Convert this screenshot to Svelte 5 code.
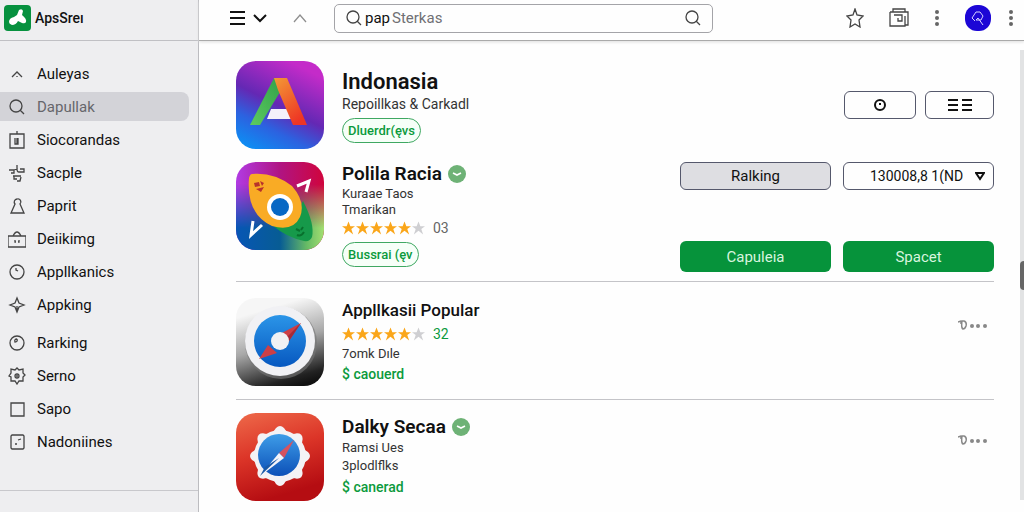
<script>
    let selected = $state("Dapullak");
    let query = $state("");
    let price = $state("130008,8 1(ND");

    const groups = [
        [
            { name: "Auleyas", d: "M4 12l5-5 5 5M9 11v1" },
            { name: "Dapullak", d: "M14 8a6 6 0 1 1-12 0a6 6 0 0 1 12 0M12 12l4 4" },
            { name: "Siocorandas", d: "M2 3h14v14H2zM9 0v3M7 7v6h3V7M9 7v6" },
            { name: "Sacple", d: "M9 1v4M1 6h5v3H3M6 6l3-1q0 3 2 3h5V5h-4M5 12h8M6 12v3h3M9 17h3l1-4" },
            { name: "Paprit", d: "M9 2a3 3 0 0 0-2 5l-4 9h13l-4-9a3 3 0 0 0-3-5z" },
            { name: "Deiikimg", d: "M0 6h18v11H0zM5 6q4-8 8 0M7 10v2h1M11 10v2h-1" },
            { name: "Appllkanics", d: "M16 9a7 7 0 1 1-14 0a7 7 0 0 1 14 0M8 5v2l2 1" },
            { name: "Appking", d: "M9 2l2 5 5 2-5 2-2 5-2-5-5-2 5-2zM9 10v6" },
        ],
        [
            { name: "Rarking", d: "M16 9a7 7 0 1 1-14 0a7 7 0 0 1 14 0M9 5q-3 0-2 3q3 0 2-3" },
            {
                name: "Serno",
                d: "M7 3l2-2 2 2 4-1v4l2 2-2 2v4l-4 0-2 3-2-3-4 0v-4L1 9l2-3V2zM11 9a2 2 0 1 1-4 0a2 2 0 0 1 4 0M8 9h2",
            },
            { name: "Sapo", d: "M3 3h13v13H3z" },
            { name: "Nadoniines", d: "M4 2h11l1 1v12l-1 1H4l-1-1V3zM7 11h2M10 7l3-1" },
        ],
    ];

    const apps = [
        {
            name: "Indonasia",
            art: "letter",
            size: "large",
            subs: ["Repoillkas & Carkadl"],
            pill: "Dluerdr(ęvs",
        },
        {
            name: "Polila Racia",
            art: "rocket",
            size: "medium",
            verified: true,
            subs: ["Kuraae Taos", "Tmarikan"],
            votes: "03",
            pill: "Bussrai (ęv",
        },
        {
            name: "Appllkasii Popular",
            art: "dial",
            size: "small",
            subs: ["7omk Dıle"],
            votes: "32",
            offer: "$ caouerd",
        },
        {
            name: "Dalky Secaa",
            art: "gear",
            size: "medium",
            verified: true,
            subs: ["Ramsi Ues", "3plodlflks"],
            offer: "$ canerad",
        },
    ];
</script>

{#snippet lens()}
    <svg class="icon" width="18" height="18" viewBox="0 0 18 18">
        <circle cx="8" cy="8" r="6" />
        <path d="M12 12l4 4" />
    </svg>
{/snippet}

{#snippet dots()}
    <svg width="6" height="18" viewBox="0 0 6 18" fill="#666">
        <circle cx="3" cy="3" r="2" />
        <circle cx="3" cy="9" r="2" />
        <circle cx="3" cy="15" r="2" />
    </svg>
{/snippet}

{#snippet stars(votes, green)}
    <div class="stars">
        {#each [1, 2, 3, 4, 5, 6] as n}
            <svg width="13" height="14" viewBox="0 0 14 14">
                <path
                    fill={n < 6 ? "#faa61a" : "#cfcfd2"}
                    d="M7 0l2 5h5l-4 3 2 6-5-4-5 4 2-6-4-3h5z"
                />
            </svg>
        {/each}
        <span class:green>{votes}</span>
    </div>
{/snippet}

{#snippet art(kind)}
    <svg class="art" width="88" height="88" viewBox="0 0 88 88">
        {#if kind === "letter"}
            <defs>
                <linearGradient id="night" x1="0.1" y1="1" x2="0.6" y2="0">
                    <stop offset="0" stop-color="#0a92f5" />
                    <stop offset="0.3" stop-color="#2c62e0" />
                    <stop offset="0.55" stop-color="#6428b4" />
                    <stop offset="1" stop-color="#c42bc9" />
                </linearGradient>
                <linearGradient id="leg" x1="0" y1="0" x2="0.6" y2="1">
                    <stop offset="0" stop-color="#f39a35" />
                    <stop offset="1" stop-color="#ee3524" />
                </linearGradient>
                <linearGradient id="leaf" x1="1" y1="0" x2="0" y2="1">
                    <stop offset="0" stop-color="#2f9e48" />
                    <stop offset="1" stop-color="#5ccb60" />
                </linearGradient>
            </defs>
            <rect width="88" height="88" fill="url(#night)" />
            <path d="M35 48h20v10H31z" fill="#f4f0fa" />
            <path d="M38 17h11l-5 14-20 33H14z" fill="url(#leaf)" />
            <path d="M38 17h13l20 47H57L42 29z" fill="url(#leg)" />
        {:else if kind === "rocket"}
            <defs>
                <linearGradient id="sky" x1="0" y1="0" x2="1" y2="0">
                    <stop offset="0" stop-color="#b13be4" />
                    <stop offset="0.5" stop-color="#b01482" />
                    <stop offset="1" stop-color="#d0043c" />
                </linearGradient>
                <linearGradient id="sea" x1="0" y1="0" x2="1" y2="0">
                    <stop offset="0" stop-color="#0756b5" />
                    <stop offset="0.5" stop-color="#075c94" />
                    <stop offset="0.8" stop-color="#66ba65" />
                    <stop offset="1" stop-color="#a3df71" />
                </linearGradient>
                <linearGradient id="fade" x1="0" y1="0" x2="0" y2="1">
                    <stop offset="0.25" stop-color="#000" />
                    <stop offset="0.75" stop-color="#fff" />
                </linearGradient>
                <mask id="low"><rect width="88" height="88" fill="url(#fade)" /></mask>
            </defs>
            <rect width="88" height="88" fill="url(#sky)" />
            <rect width="88" height="88" fill="url(#sea)" mask="url(#low)" />
            <path d="M36 63q20-2 31-24 12 23 9 36-2 5-8 4-18-4-32-16z" fill="#16994a" />
            <path
                d="M16 12q22-2 40 12 14 16 8 31-7 15-28 9Q10 52 13 16q1-4 3-4z"
                fill="#f9ab25"
            />
            <circle cx="44" cy="45" r="13" fill="#fff" />
            <circle cx="44" cy="45" r="9" fill="#0868c4" />
            <path
                d="M18 21l5-1 1 4-5 1zM24 19l4 2-2 3zM20 27l8-2-3 5z"
                fill="#b8322c"
            />
            <path d="M60 67l4 2M67 65l-2 3M61 73q4 2 7-3" stroke="#08702d" stroke-width="2" fill="none" />
            <path
                d="M61 24l12-5-3 11M17 59l-2 14 11-10"
                stroke="#fff"
                stroke-width="3"
                fill="none"
            />
        {:else if kind === "dial"}
            <defs>
                <linearGradient id="steel" x1="0.4" y1="0" x2="0.7" y2="1">
                    <stop offset="0.1" stop-color="#f6f6f6" />
                    <stop offset="0.5" stop-color="#a8a8a8" />
                    <stop offset="0.9" stop-color="#222" />
                    <stop offset="1" stop-color="#111" />
                </linearGradient>
                <linearGradient id="face" x1="0" y1="0" x2="0" y2="1">
                    <stop offset="0" stop-color="#2b95e8" />
                    <stop offset="1" stop-color="#0758c0" />
                </linearGradient>
            </defs>
            <rect width="88" height="88" fill="url(#steel)" />
            <circle cx="45" cy="45" r="36" fill="#777" opacity="0.6" />
            <circle cx="44" cy="43" r="35" fill="#f1f1f4" />
            <circle cx="44" cy="43" r="26" fill="url(#face)" />
            <path d="M65 25L49 49l-9-11zM23 61l9-14 9 8z" fill="#cd3f46" />
            <path d="M65 25L49 49l-3-5z" fill="#a52b38" />
            <circle cx="44" cy="43" r="9" fill="#f1f1f4" />
        {:else}
            <defs>
                <linearGradient id="brick" x1="0" y1="0" x2="0.3" y2="1">
                    <stop offset="0" stop-color="#ee6a4a" />
                    <stop offset="0.5" stop-color="#dc3528" />
                    <stop offset="1" stop-color="#b50d12" />
                </linearGradient>
                <linearGradient id="glass" x1="0" y1="0" x2="0" y2="1">
                    <stop offset="0" stop-color="#3e9de8" />
                    <stop offset="1" stop-color="#0c50b8" />
                </linearGradient>
            </defs>
            <rect width="88" height="88" fill="url(#brick)" />
            <g fill="#f4f2f5">
                <circle cx="44" cy="43" r="26" />
                {#each [0, 45, 90, 135, 180, 225, 270, 315] as angle}
                    <path
                        d="M34 21q4-2 6-6 4-4 8 0 2 4 6 6z"
                        transform="rotate({angle} 44 43)"
                    />
                {/each}
            </g>
            <circle cx="43" cy="42" r="21" fill="url(#glass)" />
            <path d="M58 27L43 40l5 5z" fill="#d45360" />
            <path d="M43 40l5 5-25 19z" fill="#f4f4fa" />
            <path d="M43 45L24 63l5-9z" fill="#1959a8" />
        {/if}
    </svg>
{/snippet}

<div class="shell">
    <aside>
        <a class="brand" href="#home">
            <svg width="27" height="26" viewBox="0 0 27 26">
                <rect width="27" height="26" rx="4" fill="#07913f" />
                <path
                    d="M15 5q3-2 4 1l-1 4q5 4 4 7-1 2-4 1l-4-2q-2 4-6 4-3-1-3-3 0-4 5-5l3-2z"
                    fill="#fff"
                />
            </svg>
            <span>ApsSreı</span>
        </a>
        <nav>
            {#each groups as group}
                <ul>
                    {#each group as item}
                        <li>
                            <a
                                href="#{item.name}"
                                class:selected={item.name === selected}
                                onclick={() => (selected = item.name)}
                            >
                                <svg class="icon" width="18" height="18" viewBox="0 0 18 18">
                                    <path d={item.d} />
                                </svg>
                                <span>{item.name}</span>
                            </a>
                        </li>
                    {/each}
                </ul>
            {/each}
        </nav>
        <div class="foot"></div>
    </aside>

    <div class="page">
        <header>
            <button type="button" class="plain" aria-label="Menu">
                <svg class="icon bold" width="38" height="18" viewBox="0 0 38 18">
                    <path d="M1 3h15M1 9h15M1 15h15M25 6l6 6 6-6" />
                </svg>
            </button>
            <button type="button" class="plain up" aria-label="Up">
                <svg class="icon" width="14" height="18" viewBox="0 0 14 18">
                    <path d="M1 13l6-7 6 7" />
                </svg>
            </button>
            <form class="search" role="search">
                <label for="query">{@render lens()}<span>pap</span></label>
                <input id="query" type="text" placeholder="Sterkas" bind:value={query} />
                <button type="submit" class="plain" aria-label="Search">
                    {@render lens()}
                </button>
            </form>
            <div class="tools">
                <button type="button" class="plain" aria-label="Favourite">
                    <svg class="icon" width="18" height="20" viewBox="0 0 18 20">
                        <path d="M9 1l2 6 6 1-4 4 1 7-5-3-5 3 1-7-4-4 6-1z" />
                    </svg>
                </button>
                <button type="button" class="plain" aria-label="Windows">
                    <svg class="icon" width="20" height="20" viewBox="0 0 20 20">
                        <path d="M4 4V1h12v3M1 4h18v13h-3M16 8v10H1V4M5 7h8v6H9v-3" />
                    </svg>
                </button>
                <button type="button" class="plain" aria-label="More">
                    {@render dots()}
                </button>
                <button type="button" class="plain avatar" aria-label="Account">
                    <svg width="26" height="26" viewBox="0 0 26 26">
                        <rect width="26" height="26" rx="12" fill="#1c06d6" />
                        <path
                            d="M10 16l-3-3 4-6h4l3 4-2 4h-5l2-2 5 7"
                            fill="none"
                            stroke="#d5d0ff"
                        />
                    </svg>
                </button>
                <button type="button" class="plain" aria-label="Options">
                    {@render dots()}
                </button>
            </div>
        </header>

        <div class="body">
            <main>
                {#each apps as app, i}
                    <article class={app.art}>
                        {@render art(app.art)}
                        <div class="info">
                            <h2 class={app.size}>
                                {app.name}
                                {#if app.verified}
                                    <svg width="18" height="18" viewBox="0 0 18 18">
                                        <circle cx="9" cy="9" r="9" fill="#6eb276" />
                                        <path
                                            d="M5 8l4 2 4-2"
                                            fill="none"
                                            stroke="#fff"
                                            stroke-width="1.6"
                                        />
                                    </svg>
                                {/if}
                            </h2>
                            {#if app.votes && app.offer}
                                {@render stars(app.votes, true)}
                            {/if}
                            {#each app.subs as sub}
                                <p>{sub}</p>
                            {/each}
                            {#if app.votes && app.pill}
                                {@render stars(app.votes, false)}
                            {/if}
                            {#if app.pill}
                                <button type="button" class="pill">{app.pill}</button>
                            {:else}
                                <a class="offer" href="#offer">{app.offer}</a>
                            {/if}
                        </div>
                        {#if i === 0}
                            <div class="views">
                                <button type="button" class="box" aria-label="Recent">
                                    <svg class="icon bold" width="14" height="14" viewBox="0 0 14 14">
                                        <circle cx="7" cy="7" r="5" />
                                        <path d="M6 6h2" />
                                    </svg>
                                </button>
                                <button type="button" class="box" aria-label="List">
                                    <svg class="icon bold" width="26" height="14" viewBox="0 0 26 14">
                                        <path d="M1 2h10M1 7h10M1 12h10M15 2h10M15 7h10M15 12h10" />
                                    </svg>
                                </button>
                            </div>
                        {:else if i === 1}
                            <div class="actions">
                                <button type="button" class="box shaded">Ralking</button>
                                <div class="select">
                                    <select class="box" aria-label="Price" bind:value={price}>
                                        <option>130008,8 1(ND</option>
                                    </select>
                                    <svg class="icon bold" width="10" height="10" viewBox="0 0 10 10">
                                        <path d="M1 2h8L5 8z" />
                                    </svg>
                                </div>
                                <button type="button" class="solid">Capuleia</button>
                                <button type="button" class="solid">Spacet</button>
                            </div>
                        {:else}
                            <button type="button" class="plain more" aria-label="More">
                                <svg width="30" height="10" viewBox="0 0 30 10" fill="#888">
                                    <path
                                        d="M0 2l3-1v3M4 1h2q3 1 2 5-1 3-3 3-2-1-1-8"
                                        fill="none"
                                        stroke="#888"
                                        stroke-width="1.5"
                                    />
                                    <circle cx="14" cy="6" r="2" />
                                    <circle cx="20" cy="6" r="2" />
                                    <circle cx="27" cy="6" r="2" />
                                </svg>
                            </button>
                        {/if}
                    </article>
                {/each}
            </main>
            <div class="scroll"><div class="thumb"></div></div>
        </div>
    </div>
</div>

<style>
    :global(body) {
        background: #fefefe;
        color: #111;
        font-family: Roboto, "Liberation Sans", sans-serif;
    }

    * {
        box-sizing: border-box;
    }

    button,
    input,
    select {
        font: inherit;
        color: inherit;
    }

    a {
        color: inherit;
        text-decoration: none;
    }

    svg {
        display: block;
        flex: none;
    }

    .icon {
        fill: none;
        stroke: #444;
        stroke-width: 1.3;
    }

    .icon.bold {
        stroke: #111;
        stroke-width: 2;
    }

    .plain {
        padding: 0;
        border: 0;
        background: none;
    }

    .shell {
        display: flex;
        min-height: 100vh;
    }

    aside {
        display: flex;
        flex-direction: column;
        flex: none;
        width: 199px;
        background: #eeeef0;
        border-right: 1px solid #bcbcc0;
    }

    .brand {
        display: flex;
        align-items: center;
        gap: 4px;
        height: 41px;
        padding: 0 4px 4px;
        border-bottom: 1px solid #c0c0c4;
        font-size: 14px;
        font-weight: 500;
    }

    nav {
        display: flex;
        flex-direction: column;
        flex: 1;
        gap: 9px;
        padding: 18px 9px 0 0;
    }

    ul {
        display: grid;
        gap: 4px;
        margin: 0;
        padding: 0;
        list-style: none;
    }

    li a {
        display: flex;
        align-items: center;
        gap: 11px;
        height: 29px;
        padding-left: 8px;
        border-radius: 0 8px 8px 0;
        font-size: 15px;
    }

    li a.selected {
        background: #d3d3d8;
        color: #66666b;
    }

    .foot {
        height: 22px;
        border-top: 1px solid #c8c8cc;
    }

    .page {
        display: flex;
        flex-direction: column;
        flex: 1;
        min-width: 0;
    }

    header {
        display: flex;
        align-items: center;
        height: 41px;
        padding: 0 10px 4px 30px;
        border-bottom: 1px solid #aaa;
        box-shadow: 0 1px 3px #ddd;
    }

    .up {
        margin: 0 27px 0 26px;
        opacity: 0.6;
    }

    .search {
        display: flex;
        align-items: center;
        flex: 0 1 379px;
        height: 29px;
        padding: 0 10px;
        border: 1px solid #a4a4a8;
        border-radius: 5px;
        font-size: 15px;
    }

    .search label {
        display: flex;
        align-items: center;
        gap: 2px;
    }

    .search input {
        flex: 1;
        min-width: 0;
        padding: 0 2px;
        border: 0;
        outline: 0;
        background: none;
    }

    .search input::placeholder {
        color: #707074;
    }

    .tools {
        display: flex;
        align-items: center;
        gap: 25px;
        margin-left: auto;
    }

    .tools .avatar {
        margin-right: -8px;
    }

    .body {
        display: flex;
        flex: 1;
    }

    main {
        flex: 1;
        padding: 20px 26px 0 37px;
    }

    article {
        display: flex;
        gap: 18px;
        padding-bottom: 13px;
    }

    article.rocket {
        padding-bottom: 9px;
        border-bottom: 1px solid #c4c4c8;
    }

    article.dial {
        padding-top: 16px;
        border-bottom: 1px solid #c4c4c8;
    }

    article.gear {
        padding: 13px 0 0;
    }

    .art {
        border-radius: 20px;
    }

    .info {
        display: flex;
        flex-direction: column;
        align-items: flex-start;
        flex: 1;
    }

    .letter .info {
        padding-top: 9px;
    }

    .gear .info {
        padding-top: 2px;
    }

    h2 {
        display: flex;
        align-items: center;
        gap: 6px;
        margin: 0;
        line-height: 24px;
        font-weight: 600;
    }

    h2.large {
        font-size: 22px;
    }

    h2.medium {
        font-size: 19px;
    }

    h2.small {
        font-size: 17px;
        font-weight: 500;
    }

    p {
        margin: 0;
        font-size: 14px;
        line-height: 16px;
        color: #333;
    }

    .rocket p,
    .dial p,
    .gear p {
        font-size: 13px;
    }

    .letter p {
        line-height: 20px;
    }

    .gear p {
        line-height: 18px;
    }

    .stars {
        display: flex;
        align-items: center;
        gap: 1px;
        height: 20px;
        font-size: 14px;
        color: #666;
    }

    .dial .stars {
        height: 24px;
    }

    .stars span {
        padding-left: 7px;
    }

    .stars .green {
        color: #0b9a3c;
    }

    .pill {
        height: 25px;
        margin-top: 4px;
        padding: 0 5px;
        border: 1px solid #3fa862;
        border-radius: 13px;
        background: #f6fff8;
        color: #0b9a3c;
        font-size: 13px;
        font-weight: 500;
    }

    .offer {
        color: #0b9a3c;
        font-size: 14px;
        font-weight: 500;
        line-height: 24px;
    }

    .box {
        display: grid;
        place-items: center;
        height: 28px;
        border: 1px solid #55586c;
        border-radius: 6px;
        background: #fefefe;
        font-size: 15px;
    }

    .shaded {
        background: #dedee2;
    }

    .views {
        display: grid;
        grid-template-columns: 72px 69px;
        align-content: center;
        gap: 9px;
    }

    .actions {
        display: grid;
        grid-template-columns: 151px 151px;
        align-content: start;
        gap: 51px 12px;
    }

    .select {
        display: grid;
        align-items: center;
    }

    .select > * {
        grid-area: 1 / 1;
    }

    .select select {
        width: 100%;
        appearance: none;
        padding: 0 20px 0 26px;
        font-size: 14px;
    }

    .select svg {
        justify-self: end;
        margin-right: 9px;
        pointer-events: none;
    }

    .solid {
        height: 31px;
        border: 0;
        border-radius: 6px;
        background: #06933b;
        color: #d8f5df;
        font-size: 15px;
    }

    .more {
        align-self: flex-start;
        padding: 22px 6px 0 0;
    }

    .scroll {
        display: flex;
        flex-direction: column;
        flex: none;
        justify-content: center;
        width: 4px;
        margin: 9px 0 12px;
        background: #e2e3e4;
    }

    .thumb {
        height: 29px;
        border-radius: 4px 0 0 4px;
        background: #666;
    }
</style>
